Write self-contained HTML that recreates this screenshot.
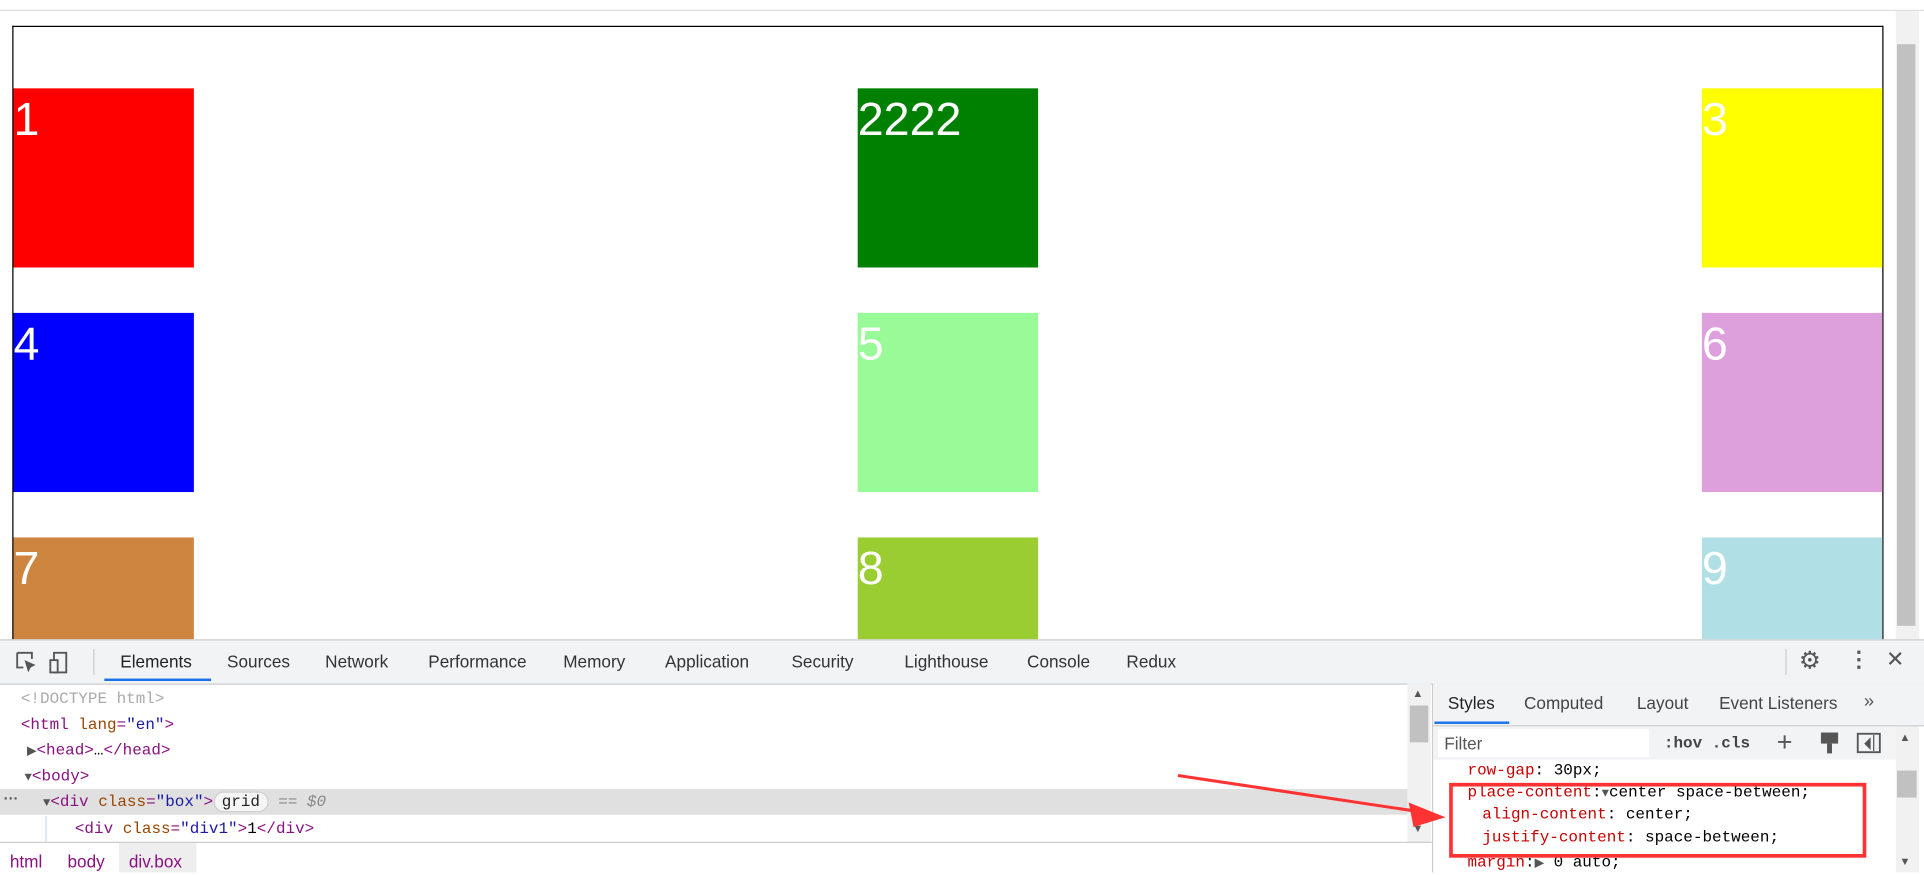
<!DOCTYPE html>
<html><head><meta charset="utf-8"><style>
html,body{margin:0;padding:0;width:1924px;height:872px;overflow:hidden;background:#fff}
#w{position:absolute;left:0;top:0;width:1568px;height:711px;transform:scale(1.22704);transform-origin:0 0;font-family:"Liberation Sans",sans-serif}
.a{position:absolute}
.c{position:absolute;width:147px;height:146px;color:#fff;font-size:38px;line-height:52px;font-family:"Liberation Sans",sans-serif}
.m{position:absolute;font-family:"Liberation Mono",monospace;font-size:13px;white-space:pre;line-height:16px}
.tab{position:absolute;top:531px;font-size:14px;color:#333}
.tag{color:#881280}.at{color:#994500}.av{color:#1a1aa6}.pr{color:#c80000}
.tr{font-size:10px;color:#555}
</style></head><body><div id="w">
<div class="a" style="left:0;top:8px;width:1568px;height:1px;background:#ddd"></div>
<div class="a" style="left:10px;top:21px;width:1523px;height:520px;border:1px solid #000;border-bottom:none"></div>
<div class="a" style="left:1545px;top:9px;width:19px;height:512px;background:#f1f1f1"></div>
<div class="a" style="left:1546px;top:36px;width:15px;height:474px;background:#c1c1c1"></div>
<div class="c" style="left:11px;top:72px;background:#f00">1</div>
<div class="c" style="left:699px;top:72px;background:#008000">2222</div>
<div class="c" style="left:1387px;top:72px;background:#ff0">3</div>
<div class="c" style="left:11px;top:255px;background:#00f">4</div>
<div class="c" style="left:699px;top:255px;background:#98fb98">5</div>
<div class="c" style="left:1387px;top:255px;background:#dda0dd">6</div>
<div class="c" style="left:11px;top:438px;background:#cd853f;height:83px">7</div>
<div class="c" style="left:699px;top:438px;background:#9acd32;height:83px">8</div>
<div class="c" style="left:1387px;top:438px;background:#b0e0e6;height:83px">9</div>
<!-- devtools toolbar -->
<div class="a" style="left:0;top:521px;width:1568px;height:35px;background:#f1f3f4;border-top:1px solid #ccc;border-bottom:1px solid #ccc"></div>
<svg class="a" style="left:12px;top:530px" width="50" height="20"><path d="M2 2h12v5M2 2v12h5" stroke="#555" fill="none" stroke-width="1.5"/><path d="M8 8l3 10 2-4 4-2z" fill="#555"/><rect x="32" y="2" width="10" height="16" stroke="#555" fill="none" stroke-width="1.5"/><rect x="29" y="8" width="6" height="10" stroke="#555" fill="#f1f3f4" stroke-width="1.5"/></svg>
<div class="a" style="left:76px;top:529px;width:1px;height:21px;background:#ccc"></div>
<div class="tab" style="left:98px;color:#222">Elements</div>
<div class="a" style="left:85px;top:553px;width:87px;height:2px;background:#1a73e8"></div>
<div class="tab" style="left:185px">Sources</div>
<div class="tab" style="left:265px">Network</div>
<div class="tab" style="left:349px">Performance</div>
<div class="tab" style="left:459px">Memory</div>
<div class="tab" style="left:542px">Application</div>
<div class="tab" style="left:645px">Security</div>
<div class="tab" style="left:737px">Lighthouse</div>
<div class="tab" style="left:837px">Console</div>
<div class="tab" style="left:918px">Redux</div>
<div class="a" style="left:1455px;top:529px;width:1px;height:21px;background:#ccc"></div>
<div class="a" style="left:1466px;top:526px;font-size:20px;color:#555">⚙</div>
<div class="a" style="left:1506px;top:527px;font-size:18px;color:#555;font-weight:bold">⋮</div>
<div class="a" style="left:1537px;top:527px;font-size:18px;color:#555">✕</div>
<!-- elements -->
<div class="a" style="left:0;top:643px;width:1147px;height:21px;background:#e0e0e0"></div>
<div class="a" style="left:37px;top:665px;width:1px;height:21px;background:#c8dbf5"></div>
<div class="m" style="left:17px;top:562px;color:#aaa">&lt;!DOCTYPE html&gt;</div>
<div class="m" style="left:17px;top:583px"><span class="tag">&lt;html </span><span class="at">lang</span><span class="tag">=</span><span class="av">"en"</span><span class="tag">&gt;</span></div>
<div class="m" style="left:22px;top:604px"><span class="tr">▶</span><span class="tag">&lt;head&gt;</span>…<span class="tag">&lt;/head&gt;</span></div>
<div class="m" style="left:20px;top:625px"><span class="tr">▼</span><span class="tag">&lt;body&gt;</span></div>
<div class="m" style="left:35px;top:646px"><span class="tr">▼</span><span class="tag">&lt;div </span><span class="at">class</span><span class="tag">=</span><span class="av">"box"</span><span class="tag">&gt;</span><span style="border:1px solid #ccc;border-radius:9px;background:#f5f5f5;padding:0 6px;color:#222">grid</span> <span style="color:#888;font-style:italic">== $0</span></div>
<div class="m" style="left:61px;top:668px"><span class="tag">&lt;div </span><span class="at">class</span><span class="tag">=</span><span class="av">"div1"</span><span class="tag">&gt;</span>1<span class="tag">&lt;/div&gt;</span></div>
<div class="a" style="left:3px;top:644px;color:#555;font-size:12px;font-weight:bold">···</div>
<div class="a" style="left:1147px;top:557px;width:19px;height:129px;background:#f1f1f1"></div>
<div class="a" style="left:1149px;top:575px;width:15px;height:30px;background:#c1c1c1"></div>
<div class="a" style="left:1151px;top:560px;font-size:9px;color:#555">▲</div>
<div class="a" style="left:1151px;top:670px;font-size:9px;color:#555">▼</div>
<div class="a" style="left:0;top:686px;width:1168px;height:1px;background:#ccc"></div>
<div class="a" style="left:97px;top:687px;width:63px;height:24px;background:#eee"></div>
<div class="a" style="left:8px;top:694px;font-size:14px;color:#881280">html</div>
<div class="a" style="left:55px;top:694px;font-size:14px;color:#881280">body</div>
<div class="a" style="left:105px;top:694px;font-size:14px;color:#881280">div.box</div>
<!-- styles -->
<div class="a" style="left:1167px;top:557px;width:1px;height:154px;background:#ccc"></div>
<div class="a" style="left:1168px;top:557px;width:400px;height:34px;background:#f1f3f4;border-bottom:1px solid #ccc"></div>
<div class="a" style="left:1180px;top:565px;font-size:14px;color:#222">Styles</div>
<div class="a" style="left:1169px;top:588px;width:61px;height:2px;background:#1a73e8"></div>
<div class="a" style="left:1242px;top:565px;font-size:14px;color:#444">Computed</div>
<div class="a" style="left:1334px;top:565px;font-size:14px;color:#444">Layout</div>
<div class="a" style="left:1401px;top:565px;font-size:14px;color:#444">Event Listeners</div>
<div class="a" style="left:1519px;top:563px;font-size:15px;color:#555">»</div>
<div class="a" style="left:1168px;top:592px;width:377px;height:27px;background:#f1f3f4"></div>
<div class="a" style="left:1172px;top:594px;width:172px;height:23px;background:#fff"></div>
<div class="a" style="left:1177px;top:598px;font-size:14px;color:#555">Filter</div>
<div class="a" style="left:1356px;top:598px;font-size:13px;font-weight:bold;color:#444;font-family:'Liberation Mono',monospace">:hov  .cls</div>
<div class="a" style="left:1448px;top:592px;font-size:22px;color:#555">+</div>
<svg class="a" style="left:1482px;top:596px" width="56" height="20"><rect x="2" y="1" width="14" height="9" fill="#555"/><rect x="7" y="10" width="4" height="8" fill="#555"/><rect x="32" y="2" width="18" height="15" stroke="#555" fill="none" stroke-width="1.5"/><path d="M45 3v13M42 6l-4 4 4 4z" stroke="#555" fill="#555"/></svg>
<div class="a" style="left:1545px;top:592px;width:19px;height:119px;background:#f1f1f1"></div>
<div class="a" style="left:1546px;top:628px;width:16px;height:22px;background:#c1c1c1"></div>
<div class="a" style="left:1548px;top:596px;font-size:9px;color:#555">▲</div>
<div class="a" style="left:1548px;top:697px;font-size:9px;color:#555">▼</div>
<div class="m" style="left:1196px;top:620px"><span class="pr">row-gap</span>: 30px;</div>
<div class="m" style="left:1196px;top:638px"><span class="pr">place-content</span>:<span class="tr">▼</span>center space-between;</div>
<div class="m" style="left:1208px;top:656px"><span class="pr">align-content</span>: center;</div>
<div class="m" style="left:1208px;top:675px"><span class="pr">justify-content</span>: space-between;</div>
<div class="m" style="left:1196px;top:695px"><span class="pr">margin</span>:<span class="tr">▶</span> 0 auto;</div>
<div class="a" style="left:1181px;top:638px;width:334px;height:55px;border:3px solid #f33"></div>
<svg class="a" style="left:0;top:0" width="1568" height="711"><path d="M960 632L1160 662" stroke="#f33" stroke-width="2.5"/><path d="M1178 666L1148 654L1152 674z" fill="#f33"/></svg>
</div></body></html>
